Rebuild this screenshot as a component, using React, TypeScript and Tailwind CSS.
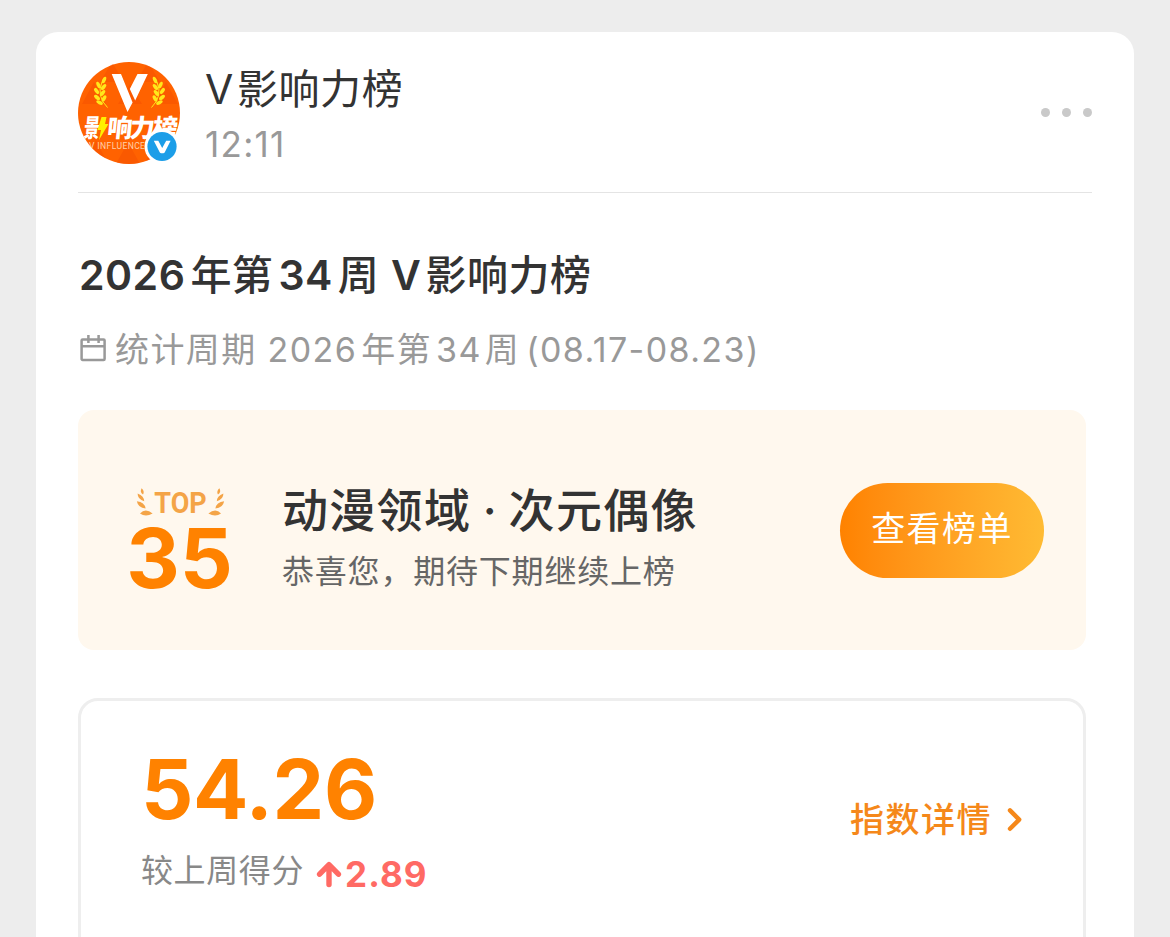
import React from "react";
import clsx from "clsx";

const FONT = "font-['Inter','Noto_Sans_CJK_SC',sans-serif]";

// Leaf positions along one laurel branch of the avatar
const AVATAR_LEAVES = [
	{ x: 26, y: 18, r: 25 },
	{ x: 20.5, y: 23, r: -25 },
	{ x: 25.6, y: 25, r: 40 },
	{ x: 18.6, y: 29, r: -35 },
	{ x: 24.6, y: 31, r: 40 },
	{ x: 19, y: 35.5, r: -50 },
	{ x: 26, y: 36.5, r: 30 },
	{ x: 21.6, y: 40.6, r: -65 },
];

const AvatarBranch: React.FC = () => (
	<g fill="#ffe81a">
		<path
			d="M24 20Q18 34 29.5 45.5"
			fill="none"
			stroke="#ffe81a"
			strokeWidth="1"
		/>
		{AVATAR_LEAVES.map((leaf) => (
			<ellipse
				key={leaf.y}
				cx={leaf.x}
				cy={leaf.y}
				rx="1.8"
				ry="3.5"
				transform={`rotate(${leaf.r} ${leaf.x} ${leaf.y})`}
			/>
		))}
	</g>
);

const Avatar: React.FC = () => (
	<div className="relative size-[102px] shrink-0">
		<svg viewBox="0 0 102 102" className="size-full">
			<clipPath id="avatar-clip">
				<circle cx="51" cy="51" r="51" />
			</clipPath>
			<g clipPath="url(#avatar-clip)">
				<rect width="102" height="102" fill="#ff6200" />
				<g fill="#f65400" opacity="0.6">
					<path d="M34 0 46 20H22ZM70 0 82 20H58ZM16 20 28 42H4ZM88 20 100 42H76ZM52 22 64 42H40ZM18 78 30 102H6ZM50 80 62 102H38ZM78 78 90 102H66Z" />
				</g>
				<path
					d="M33.7 12H43L54.6 40.5 49.5 50ZM59.5 12H69.8L57.2 38.5 51.8 27Z"
					fill="#fff"
				/>
				<AvatarBranch />
				<g transform="translate(103 0) scale(-1 1)">
					<AvatarBranch />
				</g>
				<g
					fill="#fff"
					fontSize="25"
					fontWeight="900"
					fontFamily="'Noto Sans CJK SC', sans-serif"
					transform="translate(8 0) skewX(-6)">
					<text
						x="5"
						y="75.5"
						textLength="16"
						lengthAdjust="spacingAndGlyphs">
						景
					</text>
					<text x="28.5" y="75.5">
						响
					</text>
					<text x="51" y="75.5">
						力
					</text>
					<text x="74" y="75.5">
						榜
					</text>
				</g>
				<path
					d="M23.5 55H28.5L27 62H30.5L21 78 23 68H19.5Z"
					fill="#fff000"
				/>
				<text
					x="11"
					y="87"
					fill="#ffd0a8"
					fontSize="8.6"
					fontFamily="Roboto, sans-serif"
					textLength="56"
					lengthAdjust="spacing">
					V INFLUENCE
				</text>
			</g>
		</svg>
		{/* Verified badge */}
		<svg
			viewBox="0 0 36 36"
			className="absolute left-[66px] top-[66px] size-9">
			<circle cx="18" cy="18.5" r="17.5" fill="#fff" />
			<circle cx="18" cy="18.5" r="14.6" fill="#1c9ee8" />
			<path
				d="M9.8 12.8H14.3L18.2 20 22.2 12.8H26.6L20.8 24.2Q20.3 25.2 19.2 25.2H17.2Q16.2 25.2 15.7 24.2Z"
				fill="#fff"
			/>
		</svg>
	</div>
);

const CalendarIcon: React.FC = () => (
	<svg
		viewBox="0 0 26 28"
		className="-mt-1 ml-0.5 h-7 w-[26px] shrink-0"
		fill="none"
		stroke="#999"
		strokeWidth="2.5">
		<rect x="1.6" y="5.4" width="23" height="20.6" rx="1" />
		<path d="M1.6 12.2H24.6M8.4 1V9M18.6 1V9" />
	</svg>
);

const RankBranch: React.FC<{ className?: string }> = ({ className }) => (
	<svg
		viewBox="0 0 17 28"
		className={clsx("h-7 w-[17px]", className)}
		fill="#f4a447">
		<path d="M5.6.2Q9 3.4 7 6.6 3.4 4.2 5.6.2Z" />
		<path d="M1.6 5.4Q8.2 8 8.2 13.2 1.6 11.2 1.6 5.4Z" />
		<path d="M.9 13.2Q8.6 14 9.6 20.4 2 20 .9 13.2Z" />
		<path d="M4 25.4Q9.6 19.6 16.6 25.6 9.4 29.4 4 25.4Z" />
	</svg>
);

const Header: React.FC = () => (
	<header className="flex h-[161px] border-b border-[#e4e4e4] pt-[30px]">
		<Avatar />
		<div className="ml-[25px] flex-1 pt-0.5">
			<div className="h-[50px] whitespace-nowrap text-[41px] leading-[50px] tracking-[0.6px] text-[#333]">
				<span className="mr-[3px]">V</span>影响力榜
			</div>
			<div className="mt-[7px] text-[35px] leading-[46px] tracking-[1.3px] text-[#999]">
				12:11
			</div>
		</div>
		<div className="flex h-[101px] items-center gap-3">
			<i className="size-[9px] rounded-full bg-[#c9c9c9]" />
			<i className="size-[9px] rounded-full bg-[#c9c9c9]" />
			<i className="size-[9px] rounded-full bg-[#c9c9c9]" />
		</div>
	</header>
);

const RankPanel: React.FC = () => (
	<section className="mt-[35px] flex h-60 w-[1008px] items-center rounded-2xl bg-[#fff8ee] pl-[46px] pr-[42px]">
		<div className="flex w-[112px] flex-col items-center pt-6">
			<div className="flex h-8 items-center">
				<RankBranch />
				<span className="flex w-[55px] scale-x-90 justify-center pt-0.5 font-['Roboto'] text-[30px] font-bold leading-8 text-[#f4a447]">
					TOP
				</span>
				<RankBranch className="-scale-x-100" />
			</div>
			<div className="-ml-px text-[83px] font-bold leading-[80px] text-[#ff8200]">
				35
			</div>
		</div>
		<div className="ml-[46px] flex-1 whitespace-nowrap pt-[17px]">
			<h2 className="text-[46px] font-medium leading-[60px] tracking-[1.3px] text-[#333]">
				动漫领域<span className="-ml-0.5 -mr-[3px]"> · </span>次元偶像
			</h2>
			<p className="mt-[7px] text-[32px] leading-[50px] tracking-[0.8px] text-[#666]">
				恭喜您，期待下期继续上榜
			</p>
		</div>
		<button className="h-[95px] w-[204px] rounded-full bg-linear-to-r from-[#ff8200] to-[#ffbb33] pb-1 text-[34px] tracking-[1.4px] text-white">
			查看榜单
		</button>
	</section>
);

const ScorePanel: React.FC = () => (
	<section className="mt-12 flex h-[320px] w-[1008px] justify-between rounded-[20px] border-3 border-[#eee] pl-[60px] pr-[60px]">
		<div className="pt-[43px]">
			<div className="text-[82px] font-bold leading-[92px] tracking-[-0.3px] text-[#ff8200]">
				54.26
			</div>
			<div className="mt-[7px] flex items-center whitespace-nowrap leading-[50px]">
				<span className="text-[32px] tracking-[0.6px] text-[#888]">
					较上周得分
				</span>
				<svg
					viewBox="0 0 26 28"
					className="ml-3 mt-1.5 h-7 w-[26px]"
					fill="none"
					stroke="#ff6a64"
					strokeWidth="5.4"
					strokeLinecap="round"
					strokeLinejoin="round">
					<path d="M13 24.5V5M3.6 14.2 13 4.6 22.4 14.2" />
				</svg>
				<span className="ml-[3px] mt-1.5 text-[35px] font-bold tracking-[1.1px] text-[#ff6a64]">
					2.89
				</span>
			</div>
		</div>
		<a className="mt-[93px] flex h-[50px] items-center whitespace-nowrap text-[34px] font-medium tracking-[1.5px] text-[#f5881a]">
			指数详情
			<svg
				viewBox="0 0 16 26"
				className="ml-[15px] h-[26px] w-4"
				fill="none"
				stroke="#f5881a"
				strokeWidth="4.4"
				strokeLinecap="round"
				strokeLinejoin="round">
				<path d="M3 4.4 12.2 13.6 3 22.8" />
			</svg>
		</a>
	</section>
);

const App: React.FC = () => {
	return (
		<div
			className={clsx(
				"h-[937px] w-[1170px] overflow-hidden bg-[#ededed] px-9 pt-8",
				FONT
			)}>
			<main className="h-[1000px] rounded-[22px] bg-white px-[42px]">
				<Header />
				<h1 className="mt-[52px] whitespace-nowrap pl-px text-[41px] font-semibold leading-[60px] tracking-[0.5px] text-[#333]">
					2026<span className="mx-[5px] font-medium">年第</span>34
					<span className="ml-[5px] mr-px font-medium">周</span> V
					<span className="ml-1 font-medium">影响力榜</span>
				</h1>
				<div className="mt-5 flex h-[50px] items-center whitespace-nowrap text-[34px] leading-[50px] tracking-[1.4px] text-[#999]">
					<CalendarIcon />
					<p className="ml-[9px]">
						统计周期 2026<span className="mx-1">年第</span>34
						<span className="ml-[3px]">周</span>
						<span className="ml-1.5">(08.17-08.23)</span>
					</p>
				</div>
				<RankPanel />
				<ScorePanel />
			</main>
		</div>
	);
};

export default App;
